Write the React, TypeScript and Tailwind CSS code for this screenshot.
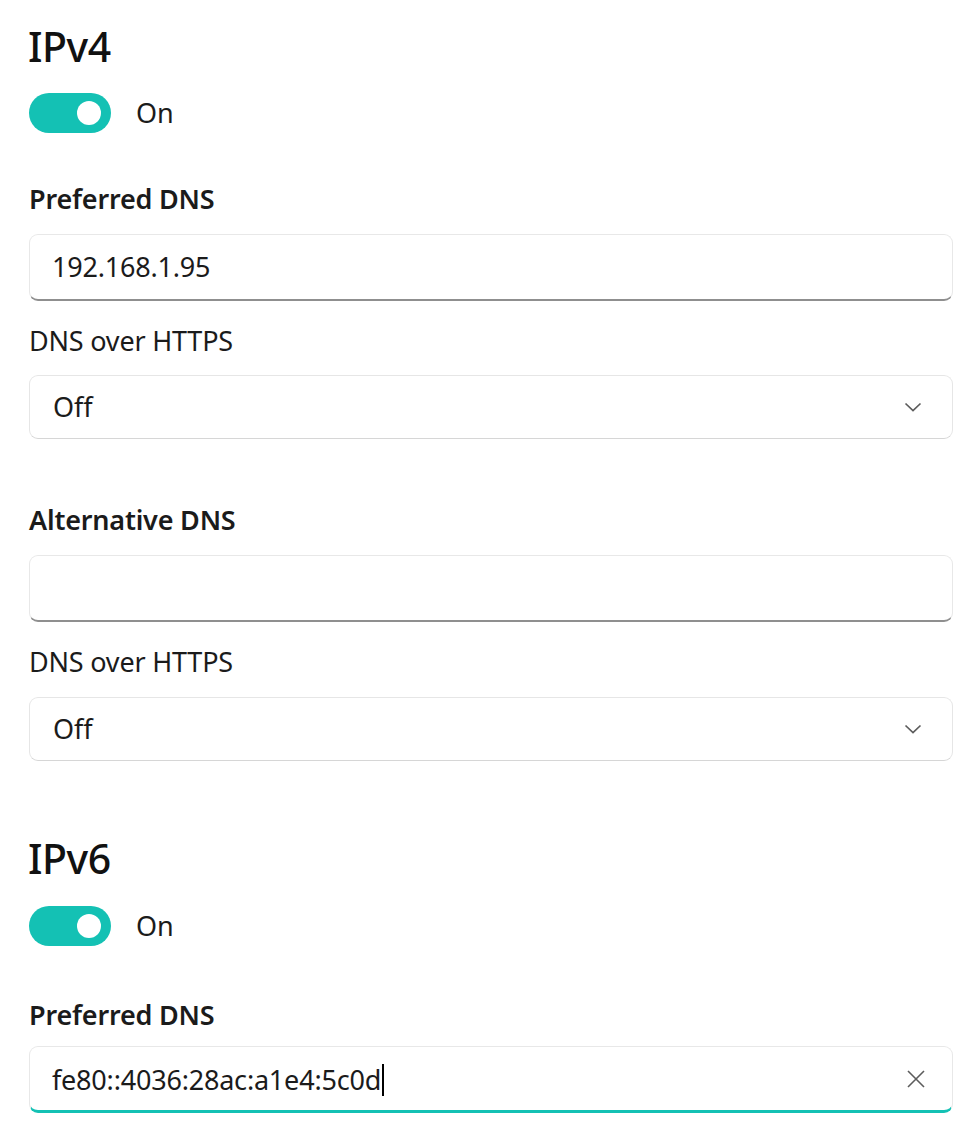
import React from "react";

/**
 * DNS settings — Windows 11 style IPv4 / IPv6 DNS editor.
 */

const font = { fontFamily: '"Noto Sans", "Open Sans", sans-serif' };

function Toggle() {
  return (
    <div className="flex items-center gap-[25px]">
      <div className="flex h-[40px] w-[82px] items-center justify-end rounded-full bg-[#14c1b4] pr-[10px]">
        <div className="h-[24px] w-[24px] rounded-full bg-white" />
      </div>
      <span className="text-[27px] leading-[38px] text-[#1b1b1b]">On</span>
    </div>
  );
}

function Heading({ children }: { children: React.ReactNode }) {
  return (
    <h2 className="-ml-px text-[41px] font-medium leading-[56px] tracking-[-0.5px] text-[#111]">
      {children}
    </h2>
  );
}

function Label({ children, bold }: { children: React.ReactNode; bold?: boolean }) {
  return (
    <div
      className={`text-[27px] leading-[38px] tracking-[-0.2px] text-[#1b1b1b] ${
        bold ? "font-semibold" : "font-normal"
      }`}
    >
      {children}
    </div>
  );
}

function TextBox({ value, focused }: { value?: string; focused?: boolean }) {
  return (
    <div
      className={`flex h-[67px] w-full items-center rounded-[9px] border border-[#e8e8e8] bg-white pl-[22px] pr-[26px] ${
        focused ? "border-b-[3px] border-b-[#14c1b4]" : "border-b-2 border-b-[#8f8f8f]"
      }`}
    >
      <span className="flex-1 text-[27px] leading-[38px] tracking-[-0.2px] text-[#1b1b1b]">
        {value}
        {focused && <span className="ml-px inline-block h-[32px] w-[2px] translate-y-[6px] bg-black" />}
      </span>
      {focused && (
        <svg width="20" height="20" viewBox="0 0 20 20" className="shrink-0">
          <path d="M2 2 L18 18 M18 2 L2 18" stroke="#5c5c5c" strokeWidth="1.6" fill="none" />
        </svg>
      )}
    </div>
  );
}

function Dropdown({ value }: { value: string }) {
  return (
    <div className="flex h-[64px] w-full items-center rounded-[9px] border border-[#e6e6e6] border-b-[#d6d6d6] bg-white pl-[23px] pr-[30px]">
      <span className="flex-1 text-[27px] leading-[38px] text-[#1b1b1b]">{value}</span>
      <svg width="18" height="10" viewBox="0 0 18 10" className="shrink-0">
        <path d="M1.5 1.5 L9 8.5 L16.5 1.5" stroke="#5c5c5c" strokeWidth="1.7" fill="none" />
      </svg>
    </div>
  );
}

export default function App() {
  return (
    <div className="min-h-screen bg-white pl-[29px] pr-[21px] pt-[18px]" style={font}>
      {/* IPv4 */}
      <Heading>IPv4</Heading>
      <div className="mt-[19px]">
        <Toggle />
      </div>

      <div className="mt-[47px]">
        <Label bold>Preferred DNS</Label>
      </div>
      <div className="mt-[16px]">
        <TextBox value="192.168.1.95" />
      </div>
      <div className="mt-[21px]">
        <Label>DNS over HTTPS</Label>
      </div>
      <div className="mt-[15px]">
        <Dropdown value="Off" />
      </div>

      <div className="mt-[62px]">
        <Label bold>Alternative DNS</Label>
      </div>
      <div className="mt-[16px]">
        <TextBox />
      </div>
      <div className="mt-[21px]">
        <Label>DNS over HTTPS</Label>
      </div>
      <div className="mt-[16px]">
        <Dropdown value="Off" />
      </div>

      {/* IPv6 */}
      <div className="mt-[69px]">
        <Heading>IPv6</Heading>
      </div>
      <div className="mt-[20px]">
        <Toggle />
      </div>
      <div className="mt-[50px]">
        <Label bold>Preferred DNS</Label>
      </div>
      <div className="mt-[12px]">
        <TextBox value="fe80::4036:28ac:a1e4:5c0d" focused />
      </div>
    </div>
  );
}
